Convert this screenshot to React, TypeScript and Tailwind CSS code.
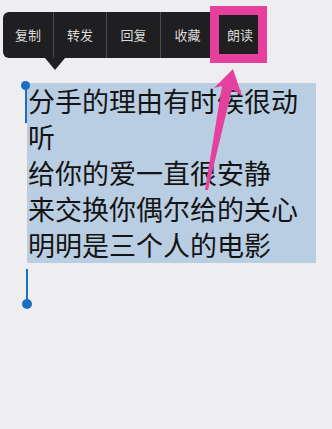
const menuItems = [
  { label: "复制", w: "w-[51px]" },
  { label: "转发", w: "w-[53px]" },
  { label: "回复", w: "w-[54px]" },
  { label: "收藏", w: "w-[54px]" },
  { label: "朗读", w: "w-[50px]" },
];

const lines = ["分手的理由有时候很动听", "给你的爱一直很安静", "来交换你偶尔给的关心", "明明是三个人的电影"];

export default function App() {
  return (
    <div
      className="relative w-[332px] h-[429px] overflow-hidden bg-[#eeeef0]"
      style={{ fontFamily: '"Noto Sans CJK SC", "Noto Sans", sans-serif' }}
    >
      {/* context menu */}
      <div className="relative ml-[3px] mt-[12px] flex h-[46px] w-fit rounded-[6px] bg-[#1f1e20]">
        {menuItems.map((item, i) => (
          <div
            key={item.label}
            className={`${item.w} flex items-center justify-center text-[13px] text-[#d9d9d9] ${
              i < menuItems.length - 1 ? "border-r border-[#4a494c]" : ""
            }`}
          >
            {item.label}
          </div>
        ))}
        <div className="absolute left-[42px] top-[46px] h-0 w-0 border-x-[10px] border-t-[12px] border-x-transparent border-t-[#1f1e20]" />
      </div>

      {/* selected text */}
      <div className="relative ml-[27px] mt-[25px] w-[289px] bg-[#b9cee2] pl-[1px] text-[27px] leading-[36px] text-[#141414]">
        {lines.map((l) => (
          <div key={l}>{l}</div>
        ))}
        {/* start handle */}
        <div className="absolute -left-[6px] -top-[2px] flex flex-col items-center">
          <div className="h-[9px] w-[9px] rounded-full bg-[#1b6fbf]" />
          <div className="-mt-[6px] h-[39px] w-[2px] bg-[#1b6fbf]" />
        </div>
      </div>

      {/* end handle */}
      <div className="ml-[22px] mt-[6px] flex w-[10px] flex-col items-center">
        <div className="h-[33px] w-[2px] bg-[#1b6fbf]" />
        <div className="-mt-[3px] h-[10px] w-[10px] rounded-full bg-[#1b6fbf]" />
      </div>

      {/* annotation */}
      <div className="absolute left-[210px] top-[6px] h-[57px] w-[57px] border-[9px] border-[#e6409e]" />
      <svg className="absolute left-0 top-0" width="332" height="429" viewBox="0 0 332 429">
        <polygon points="233,69 242,96 232,89 208,190 205,190 222,86 214,88" fill="#e6409e" />
      </svg>
    </div>
  );
}
